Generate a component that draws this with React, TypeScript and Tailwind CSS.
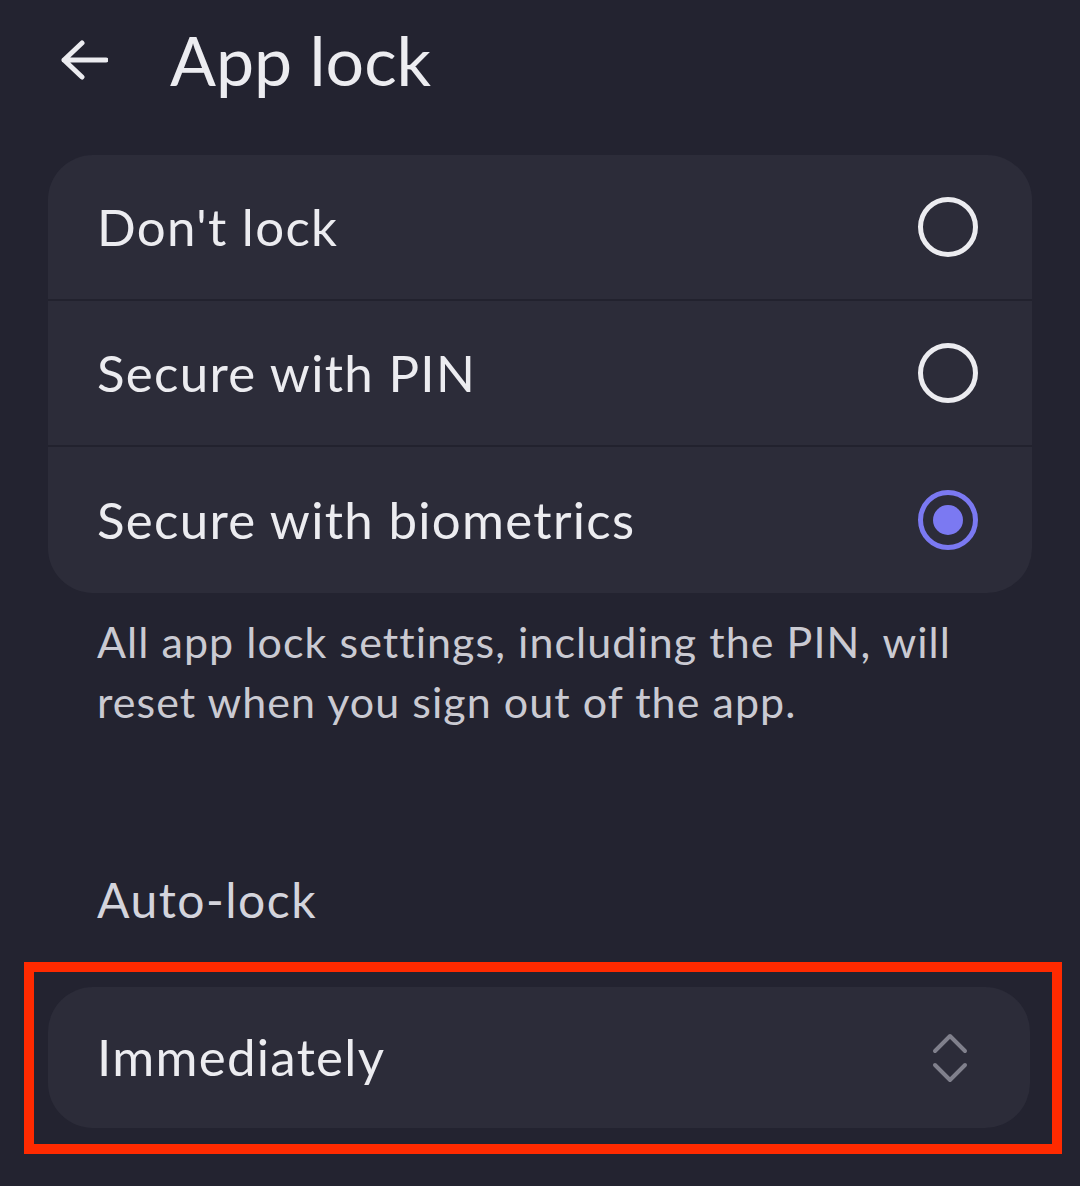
import React from "react";

const font = { fontFamily: "Lato, 'Noto Sans', sans-serif" };

function Radio({ checked }: { checked?: boolean }) {
  if (checked) {
    return (
      <div className="w-[60px] h-[60px] rounded-full border-[5px] border-[#7b79f2] flex items-center justify-center">
        <div className="w-[30px] h-[30px] rounded-full bg-[#7b79f2]" />
      </div>
    );
  }
  return <div className="w-[60px] h-[60px] rounded-full border-[5px] border-[#ececf0]" />;
}

function Row({ label, checked, last }: { label: string; checked?: boolean; last?: boolean }) {
  return (
    <div className={`h-[146px] flex items-center justify-between pl-[49px] pr-[54px] ${last ? "" : "border-b-[2px] border-[#22222e]"}`}>
      <span className="text-[51px] text-[#ececf0] tracking-[1.3px]">{label}</span>
      <Radio checked={checked} />
    </div>
  );
}

export default function App() {
  return (
    <div className="w-[1080px] h-[1186px] bg-[#232330] overflow-hidden" style={font}>
      <div className="h-[120px] flex items-center pl-[60px]">
        <svg width="48" height="40" viewBox="0 0 48 40" fill="none" stroke="#ececf0" strokeWidth="5" strokeLinecap="round" strokeLinejoin="round">
          <path d="M46 20H4M22 3L4 20l18 17" />
        </svg>
        <span className="ml-[62px] text-[68px] text-[#ececf0]">App lock</span>
      </div>
      <div className="mt-[35px] mx-[48px] rounded-[45px] bg-[#2c2c39] overflow-hidden">
        <Row label="Don't lock" />
        <Row label="Secure with PIN" />
        <Row label="Secure with biometrics" checked last />
      </div>
      <p className="mt-[19px] pl-[97px] pr-[80px] text-[43px] leading-[60px] text-[#cacad2] tracking-[1.05px]">
        All app lock settings, including the PIN, will reset when you sign out of the app.
      </p>
      <div className="mt-[138px] pl-[97px] text-[48px] text-[#d4d4dc] leading-[60px] tracking-[1.5px]">Auto-lock</div>
      <div className="mt-[32px] ml-[24px] w-[1038px] h-[192px] border-[10px] border-[#ff2a00] pt-[15px] pl-[14px] pr-[22px]">
        <div className="h-[141px] rounded-[45px] bg-[#2c2c39] flex items-center justify-between pl-[49px] pr-[62px]">
          <span className="text-[51px] text-[#ececf0] tracking-[1.3px]">Immediately</span>
          <svg width="36" height="52" viewBox="0 0 36 52" fill="none" stroke="#80808c" strokeWidth="4" strokeLinecap="round" strokeLinejoin="round">
            <path d="M3 19L18 4l15 15M3 33l15 15 15-15" />
          </svg>
        </div>
      </div>
    </div>
  );
}
